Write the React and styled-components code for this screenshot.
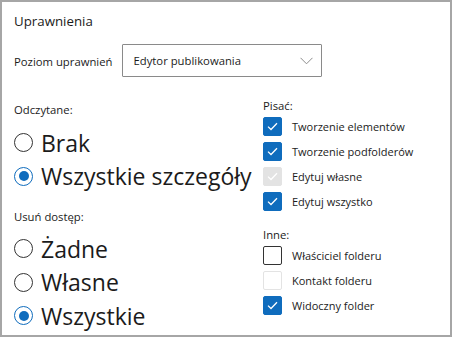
import styled, { createGlobalStyle } from "styled-components";

const GlobalStyle = createGlobalStyle`
  body {
    margin: 0;
    font-family: "Open Sans", "Liberation Sans", sans-serif;
    color: #1b1b1b;
    background: #fff;
  }
`;

const Frame = styled.div`
  width: 452px;
  height: 337px;
  box-sizing: border-box;
  border: 2px solid #a6a6a6;
  padding: 10px 12px 0;
  overflow: hidden;
`;

const Title = styled.h2`
  margin: 0;
  font-size: 13.3px;
  font-weight: 400;
  line-height: 18px;
`;

const LevelRow = styled.div`
  display: flex;
  align-items: center;
  gap: 10px;
  margin-top: 14px;
`;

const LevelLabel = styled.span`
  font-size: 11.3px;
  line-height: 16px;
  margin-top: 3px;
`;

const Select = styled.div`
  width: 200px;
  height: 33px;
  box-sizing: border-box;
  border: 1px solid #8a8a8a;
  border-radius: 1px;
  display: flex;
  align-items: center;
  justify-content: space-between;
  padding: 0 8px 0 10px;
  font-size: 11.3px;
`;

const Columns = styled.div`
  display: grid;
  grid-template-columns: 249px 1fr;
  align-items: start;
`;

const Column = styled.div`
  display: flex;
  flex-direction: column;
  margin-top: ${(p) => p.$top}px;
`;

const GroupLabel = styled.div`
  font-size: 11.3px;
  line-height: 16px;
  margin-top: ${(p) => p.$gap || 0}px;
  margin-bottom: ${(p) => p.$after || 0}px;
`;

const RadioRow = styled.label`
  display: flex;
  align-items: center;
  gap: 8px;
  height: 33.5px;
  font-size: 23px;
  white-space: nowrap;
`;

const Radio = styled.span`
  flex: none;
  width: 19px;
  height: 19px;
  box-sizing: border-box;
  border-radius: 50%;
  border: 1px solid ${(p) => (p.$on ? "#0f6cbd" : "#333")};
  display: flex;
  align-items: center;
  justify-content: center;

  &::after {
    content: "";
    width: 10px;
    height: 10px;
    border-radius: 50%;
    background: ${(p) => (p.$on ? "#0f6cbd" : "transparent")};
  }
`;

const CheckRow = styled.label`
  display: flex;
  align-items: center;
  gap: 10px;
  height: 25px;
  font-size: 11px;
  white-space: nowrap;
`;

const Box = styled.span`
  flex: none;
  width: 19px;
  height: 19px;
  box-sizing: border-box;
  border-radius: 2px;
  display: flex;
  align-items: center;
  justify-content: center;
  background: ${(p) =>
    p.$on ? (p.$disabled ? "#e3e3e3" : "#0f6cbd") : "#fff"};
  border: 1px solid
    ${(p) =>
      p.$on
        ? p.$disabled
          ? "#e3e3e3"
          : "#0f6cbd"
        : p.$disabled
        ? "#e3e3e3"
        : "#333"};
`;

const Tick = () => (
  <svg width="11" height="9" viewBox="0 0 11 9">
    <path d="M1 4.6 L4 7.5 L10 1.3" fill="none" stroke="#fff" strokeWidth="1.3" />
  </svg>
);

const Chevron = () => (
  <svg width="13" height="8" viewBox="0 0 13 8">
    <path d="M0.5 0.8 L6.5 6.8 L12.5 0.8" fill="none" stroke="#8c8c8c" strokeWidth="1" />
  </svg>
);

const RadioItem = ({ on, children }) => (
  <RadioRow>
    <Radio $on={on} />
    {children}
  </RadioRow>
);

const CheckItem = ({ on, disabled, children }) => (
  <CheckRow>
    <Box $on={on} $disabled={disabled}>
      {on && <Tick />}
    </Box>
    {children}
  </CheckRow>
);

export default function App() {
  return (
    <>
      <GlobalStyle />
      <Frame>
        <Title>Uprawnienia</Title>
        <LevelRow>
          <LevelLabel>Poziom uprawnień</LevelLabel>
          <Select>
            <span>Edytor publikowania</span>
            <Chevron />
          </Select>
        </LevelRow>
        <Columns>
          <Column $top={25}>
            <GroupLabel $after={8}>Odczytane:</GroupLabel>
            <RadioItem>Brak</RadioItem>
            <RadioItem on>Wszystkie szczegóły</RadioItem>
            <GroupLabel $gap={16} $after={7}>
              Usuń dostęp:
            </GroupLabel>
            <RadioItem>Żadne</RadioItem>
            <RadioItem>Własne</RadioItem>
            <RadioItem on>Wszystkie</RadioItem>
          </Column>
          <Column $top={21}>
            <GroupLabel>Pisać:</GroupLabel>
            <CheckItem on>Tworzenie elementów</CheckItem>
            <CheckItem on>Tworzenie podfolderów</CheckItem>
            <CheckItem on disabled>
              Edytuj własne
            </CheckItem>
            <CheckItem on>Edytuj wszystko</CheckItem>
            <GroupLabel $gap={13}>Inne:</GroupLabel>
            <CheckItem>Właściciel folderu</CheckItem>
            <CheckItem disabled>Kontakt folderu</CheckItem>
            <CheckItem on>Widoczny folder</CheckItem>
          </Column>
        </Columns>
      </Frame>
    </>
  );
}
